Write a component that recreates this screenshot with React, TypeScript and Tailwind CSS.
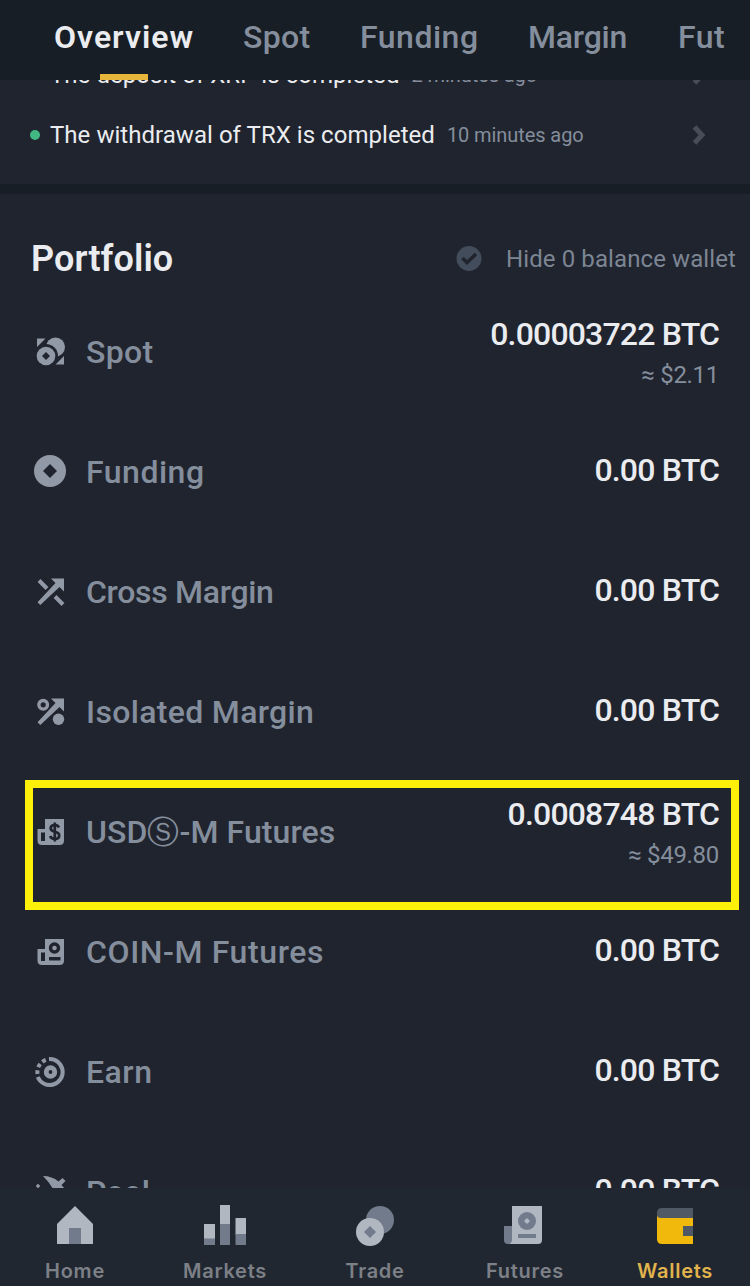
import type { ReactNode } from "react";

const TABS = [
  { label: "Overview", style: "w-[139px] font-semibold text-[#eaecef] tracking-[1px]" },
  { label: "Spot", style: "w-[67px] font-medium text-[#848e9c] tracking-[0.3px]" },
  { label: "Funding", style: "w-[118px] font-medium text-[#848e9c] tracking-[0.5px]" },
  { label: "Margin", style: "w-[100px] font-medium text-[#848e9c] tracking-[-0.2px]" },
  { label: "Fut", style: "w-[48px] font-medium text-[#848e9c] tracking-[0.5px]" },
];

function Chevron() {
  return (
    <svg className="h-5 w-4" viewBox="0 0 16 20" fill="none">
      <path d="M2.500 2l7.500 8-7.500 8" stroke="#474d57" strokeWidth="5" />
    </svg>
  );
}

function Notice({ text, time }: { text: string; time: string }) {
  return (
    <div className="flex h-[60px] shrink-0 items-center pl-[30px] pr-[42px]">
      <span className="size-[10px] rounded-full bg-[#41b883]" />
      <span className="ml-[10px] text-[24px] tracking-[0.04px] text-[#eaecef]">{text}</span>
      <span className="ml-3 text-[20px] tracking-[-0.08px] text-[#848e9c]">{time}</span>
      <span className="ml-auto">
        <Chevron />
      </span>
    </div>
  );
}

function Glyph({ children }: { children: ReactNode }) {
  return (
    <svg className="size-9 shrink-0" viewBox="0 0 36 36" fill="#9299a6">
      {children}
    </svg>
  );
}

const BG = "#20242e";

const SpotIcon = (
  <Glyph>
    <path d="M5 4.500h8.500L5 13zM32 22v8.500h-8.500z" />
    <circle cx="23.500" cy="13" r="9.500" />
    <circle cx="14" cy="22" r="12" fill={BG} />
    <circle cx="14" cy="22" r="9.300" />
    <path d="M14 18l4 4-4 4-4-4z" fill={BG} />
  </Glyph>
);

const FundingIcon = (
  <Glyph>
    <circle cx="18" cy="17" r="16" />
    <path d="M18 10l7 7-7 7-7-7z" fill={BG} />
  </Glyph>
);

const CrossIcon = (
  <Glyph>
    <path d="M19 4.500h13v13l-4.500-4.500L8.300 31 5.500 28.200 23.500 9z" />
    <path d="M7 6.500l8 8M23 22.500l8 8" stroke="#9299a6" strokeWidth="4" />
  </Glyph>
);

const IsolatedIcon = (
  <Glyph>
    <path d="M19 4.500h13v13l-4.500-4.500L8.300 31 5.500 28.200 23.500 9z" />
    <circle cx="11.200" cy="10.800" r="4.300" fill="none" stroke="#9299a6" strokeWidth="3.400" />
    <circle cx="26.500" cy="25.300" r="7" fill={BG} />
    <circle cx="26.500" cy="25.300" r="5.700" />
  </Glyph>
);

const UsdIcon = (
  <Glyph>
    <path d="M13 5h19v21.500q0 4.500-4.500 4.500H10q-4.500 0-4.500-4.500V15H13z" />
    <path d="M9 18.500h4V27H9z" fill={BG} />
    <path d="M27 13.500q-1-2.500-4.300-2.500-4 0-4 3.300 0 2.600 4 3.400 4.500.8 4.500 3.700 0 3.400-4.300 3.400-3.800 0-4.700-2.800M22.800 8.500v19" fill="none" stroke={BG} strokeWidth="2.700" />
  </Glyph>
);

const CoinIcon = (
  <Glyph>
    <path d="M13 5h19v21.500q0 4.500-4.500 4.500H10q-4.500 0-4.500-4.500V15H13z" />
    <path d="M9 18.500h4V27H9zM17 23h11.500v3.500H17z" fill={BG} />
    <circle cx="22.500" cy="14" r="4" fill="none" stroke={BG} strokeWidth="3.400" />
  </Glyph>
);

const EarnIcon = (
  <Glyph>
    <g fill="none" stroke="#9299a6">
      <path d="M17 5a13 13 0 1 1-11.300 18" strokeWidth="4" />
      <path d="M5.500 20a13 13 0 0 1 9.800-14.500" strokeWidth="4" strokeDasharray="3.800 3" />
      <circle cx="18.500" cy="18" r="4.300" strokeWidth="4.800" />
    </g>
  </Glyph>
);

const PoolIcon = (
  <Glyph>
    <path d="M11 2q9 0 15.500 5.500L30.500 4l3 3-4 4 3.500 4-5 6-7.500-7Q17 8 11 2zM6 9.700l2.300 2.300L6 14.300 3.700 12z" />
  </Glyph>
);

type Wallet = { name: string; icon: ReactNode; amount: string; fiat?: string; tracking: string };

const WALLETS: Wallet[] = [
  { name: "Spot", icon: SpotIcon, amount: "0.00003722 BTC", fiat: "≈ $2.11", tracking: "tracking-[0.3px]" },
  { name: "Funding", icon: FundingIcon, amount: "0.00 BTC", tracking: "tracking-[0.5px]" },
  { name: "Cross Margin", icon: CrossIcon, amount: "0.00 BTC", tracking: "tracking-[-0.3px]" },
  { name: "Isolated Margin", icon: IsolatedIcon, amount: "0.00 BTC", tracking: "tracking-[0.33px]" },
  { name: "USDⓈ-M Futures", icon: UsdIcon, amount: "0.0008748 BTC", fiat: "≈ $49.80", tracking: "tracking-[0.08px]" },
  { name: "COIN-M Futures", icon: CoinIcon, amount: "0.00 BTC", tracking: "tracking-[0.6px]" },
  { name: "Earn", icon: EarnIcon, amount: "0.00 BTC", tracking: "tracking-[0.5px]" },
  { name: "Pool", icon: PoolIcon, amount: "0.00 BTC", tracking: "tracking-[-0.3px]" },
];

function WalletRow({ wallet }: { wallet: Wallet }) {
  const boxed = wallet.name.startsWith("USD");
  return (
    <div className="relative flex h-[120px] shrink-0 items-start justify-between pl-8 pr-[31px]">
      {boxed && <div className="absolute left-[25px] top-[-12px] h-[130px] w-[714px] border-8 border-[#fff00a]" />}
      <div className="flex h-20 items-center gap-[18px]">
        {wallet.icon}
        <span className={`whitespace-nowrap text-[32px] font-medium leading-9 text-[#848e9c] ${wallet.tracking}`}>{wallet.name}</span>
      </div>
      <div className={`flex flex-col items-end ${wallet.fiat ? "pt-1" : "pt-5"}`}>
        <span className="text-[32px] font-medium leading-9 tracking-[-0.82px] text-[#eaecef]">{wallet.amount}</span>
        {wallet.fiat && <span className="mt-[7px] text-[24px] leading-8 tracking-[-0.3px] text-[#848e9c]">{wallet.fiat}</span>}
      </div>
    </div>
  );
}

const NAV = [
  {
    label: "Home",
    color: "text-[#7d8086]",
    icon: (
      <>
        <path d="M20 3l18 18v20H2V21z" fill="#b0b7c1" />
        <path d="M14 25h12v16H14z" fill="#717b8c" />
      </>
    ),
  },
  {
    label: "Markets",
    color: "text-[#7d8086]",
    icon: (
      <>
        <path d="M-1 21h11v15H-1zM15 2h10v19H15zM30.500 15h10.500v17H30.500z" fill="#b0b7c1" />
        <path d="M-1 35.500h11V42H-1zM15 21h10v21H15zM30.500 31h10.500v11H30.500z" fill="#717b8c" />
      </>
    ),
  },
  {
    label: "Trade",
    color: "text-[#7d8086]",
    icon: (
      <>
        <circle cx="25" cy="17" r="14" fill="#717b8c" />
        <circle cx="15" cy="29" r="14" fill="#b0b7c1" />
        <path d="M15 23l6 6-6 6-6-6z" fill="#717b8c" />
      </>
    ),
  },
  {
    label: "Futures",
    color: "text-[#7d8086]",
    icon: (
      <>
        <path d="M-1 23h8v14a4 4 0 0 1-8 0z" fill="#717b8c" />
        <path d="M7 3h30v34q0 4-4 4H4q3-1 3-5z" fill="#b0b7c1" />
        <circle cx="22" cy="18" r="9" fill="#717b8c" />
        <path d="M22 15l3 3-3 3-3-3z" fill="#b0b7c1" />
        <path d="M13 31h18v4H13z" fill="#717b8c" />
      </>
    ),
  },
  {
    label: "Wallets",
    color: "text-[#e0b34c]",
    icon: (
      <>
        <path d="M2 9h36v32H7q-5 0-5-5z" fill="#f0b90b" />
        <path d="M2 12V10q0-5 5-5h31v10H6q-4 0-4-3zM28 23h10v10H28z" fill="#4f5865" />
      </>
    ),
  },
];

export default function App() {
  return (
    <div className="flex h-[1286px] w-[750px] flex-col overflow-hidden bg-[#20242e] font-['Roboto','Liberation_Sans',sans-serif]">
      <header className="relative z-10 flex h-20 shrink-0 gap-[50px] bg-[#181e25] pl-[54px] pt-[15px]">
        {TABS.map((tab) => (
          <span key={tab.label} className={`h-11 shrink-0 whitespace-nowrap text-[32px] leading-[44px] ${tab.style}`}>
            {tab.label}
          </span>
        ))}
        <span className="absolute bottom-0 left-[100px] h-[6px] w-12 bg-[#e6b53c]" />
      </header>
      <section className="flex h-[104px] shrink-0 flex-col justify-end overflow-hidden pb-[19px]">
        <Notice text="The deposit of XRP is completed" time="2 minutes ago" />
        <Notice text="The withdrawal of TRX is completed" time="10 minutes ago" />
      </section>
      <div className="h-[10px] shrink-0 bg-[#181e25]" />
      <main className="flex min-h-0 flex-1 flex-col overflow-hidden">
        <div className="flex h-[118px] shrink-0 items-center justify-between pl-[31px] pr-[14px] pt-[12px]">
          <h1 className="text-[36px] font-semibold tracking-[0.1px] text-[#eaecef]">Portfolio</h1>
          <div className="-mt-px flex items-center">
            <svg className="size-[26px]" viewBox="0 0 26 26">
              <circle cx="13" cy="12.500" r="12.500" fill="#434c5a" />
              <path d="M6.500 12l4.500 4.500 9-8.500" fill="none" stroke={BG} strokeWidth="3.500" />
            </svg>
            <span className="ml-6 text-[24px] tracking-[0.1px] text-[#7d8694]">Hide 0 balance wallet</span>
          </div>
        </div>
        {WALLETS.map((wallet) => (
          <WalletRow key={wallet.name} wallet={wallet} />
        ))}
      </main>
      <nav className="grid h-[98px] shrink-0 grid-cols-5 bg-[#202731]">
        {NAV.map((item) => (
          <div key={item.label} className="flex flex-col items-center pt-[15px]">
            <svg className="h-11 w-10 overflow-visible" viewBox="0 0 40 44">
              {item.icon}
            </svg>
            <span className={`mt-3 font-['Inter','Liberation_Sans',sans-serif] text-[20px] font-semibold leading-6 tracking-[0.75px] ${item.color}`}>
              {item.label}
            </span>
          </div>
        ))}
      </nav>
    </div>
  );
}
